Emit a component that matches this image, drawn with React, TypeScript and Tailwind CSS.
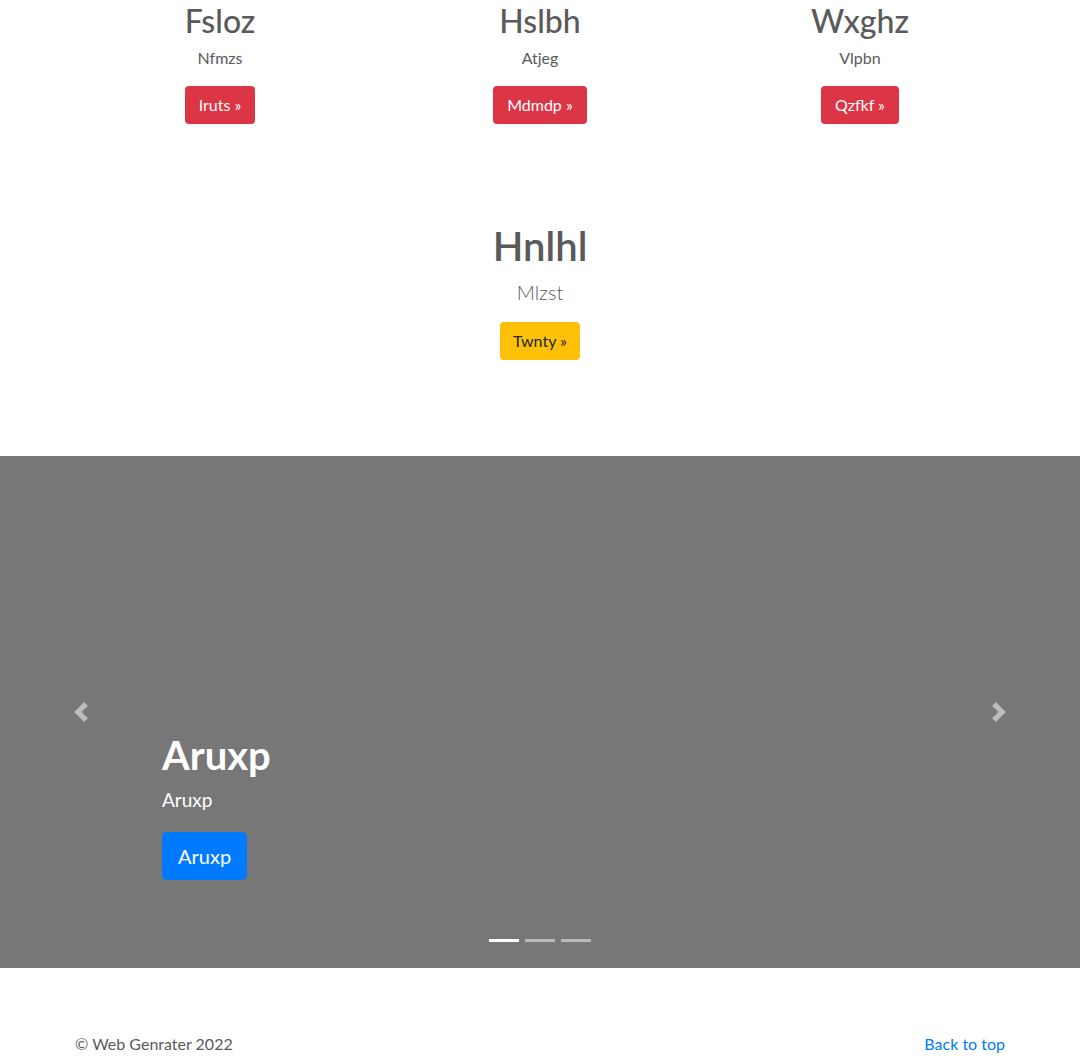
import React from "react"

const features = [
  { title: "Fsloz", text: "Nfmzs", cta: "Iruts" },
  { title: "Hslbh", text: "Atjeg", cta: "Mdmdp" },
  { title: "Wxghz", text: "Vlpbn", cta: "Qzfkf" },
]

function Chevron({ dir }: { dir: "left" | "right" }) {
  return (
    <svg width="20" height="20" viewBox="0 0 8 8" fill="#fff" className="opacity-50">
      {dir === "left" ? (
        <path d="M5.25 0l-4 4 4 4 1.5-1.5L4.25 4l2.5-2.5L5.25 0z" />
      ) : (
        <path d="M2.75 0l-1.5 1.5L3.75 4l-2.5 2.5L2.75 8l4-4-4-4z" />
      )}
    </svg>
  )
}

export default function App() {
  return (
    <div className="min-h-screen bg-white text-[#5a5a5a] font-['Lato','Noto_Sans',sans-serif]">
      {/* Marketing columns */}
      <div className="mx-auto w-[960px] grid grid-cols-3 pt-[2px]">
        {features.map((f) => (
          <div key={f.title} className="flex flex-col items-center px-[15px]">
            <h2 className="text-[32px] leading-[38px] font-medium mb-[6px]">{f.title}</h2>
            <p className="text-base leading-6 mb-4">{f.text}</p>
            <button className="h-[38px] px-[14px] rounded bg-[#dc3545] text-white text-base leading-6">
              {f.cta} »
            </button>
          </div>
        ))}
      </div>

      {/* Featured block */}
      <div className="flex flex-col items-center pt-[98px] pb-[96px]">
        <h2 className="text-[40px] leading-[48px] font-semibold mb-[7px]">Hnlhl</h2>
        <p className="text-[20px] leading-[30px] font-light mb-[15px]">Mlzst</p>
        <button className="h-[38px] px-[13px] rounded bg-[#ffc107] text-[#212529] text-base leading-6">
          Twnty »
        </button>
      </div>

      {/* Carousel */}
      <div className="h-[512px] bg-[#777] flex">
        <div className="w-[15%] flex items-center justify-center">
          <Chevron dir="left" />
        </div>
        <div className="flex-1 flex flex-col justify-end pb-[26px]">
          <div className="text-white">
            <h1 className="text-[40px] leading-[48px] font-bold mb-[7px]">Aruxp</h1>
            <p className="text-[19px] leading-[28px] mb-[18px]">Aruxp</p>
            <button className="h-[48px] px-4 rounded-[5px] bg-[#007bff] text-white text-[20px] leading-[30px]">
              Aruxp
            </button>
          </div>
          <div className="flex justify-center gap-[6px] mt-[59px]">
            <span className="w-[30px] h-[3px] bg-white" />
            <span className="w-[30px] h-[3px] bg-white/50" />
            <span className="w-[30px] h-[3px] bg-white/50" />
          </div>
        </div>
        <div className="w-[15%] flex items-center justify-center">
          <Chevron dir="right" />
        </div>
      </div>

      {/* Footer */}
      <footer className="mx-auto w-[960px] px-[15px] pt-16 flex justify-between text-base leading-6">
        <p>© Web Genrater 2022</p>
        <a href="#" className="text-[#007bff]">Back to top</a>
      </footer>
    </div>
  )
}
